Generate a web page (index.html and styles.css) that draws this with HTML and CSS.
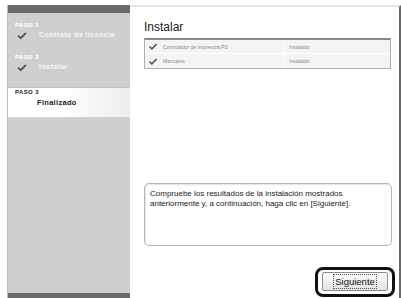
FILE: index.html
```html
<!DOCTYPE html>
<html>
<head>
<meta charset="utf-8">
<link rel="stylesheet" href="styles.css">
</head>
<body>
<div class="window">
  <aside class="sidebar">
    <div class="side-top"></div>
    <div class="steps">
      <div class="step done">
        <div class="step-label">PASO 1</div>
        <div class="step-name"><svg class="chk" viewBox="0 0 10 8"><path d="M0.6 4.2 L3.6 7 L9.5 0.9" fill="none" stroke="currentColor" stroke-width="2"/></svg>Contrato de licencia</div>
      </div>
      <div class="step done">
        <div class="step-label">PASO 2</div>
        <div class="step-name"><svg class="chk" viewBox="0 0 10 8"><path d="M0.6 4.2 L3.6 7 L9.5 0.9" fill="none" stroke="currentColor" stroke-width="2"/></svg>Instalar</div>
      </div>
      <div class="step current">
        <div class="step-label">PASO 3</div>
        <div class="step-name plain">Finalizado</div>
      </div>
    </div>
    <div class="side-fill"></div>
    <div class="side-bottom"></div>
  </aside>
  <main class="content">
    <h1 class="title">Instalar</h1>
    <div class="table">
      <div class="row">
        <div class="cell name"><svg class="tchk" viewBox="0 0 10 8"><path d="M0.6 4.2 L3.6 7 L9.5 0.9" fill="none" stroke="currentColor" stroke-width="2"/></svg>Controlador de impresora PS</div>
        <div class="cell status">Instalado</div>
      </div>
      <div class="row">
        <div class="cell name"><svg class="tchk" viewBox="0 0 10 8"><path d="M0.6 4.2 L3.6 7 L9.5 0.9" fill="none" stroke="currentColor" stroke-width="2"/></svg>Manuales</div>
        <div class="cell status">Instalado</div>
      </div>
    </div>
    <div class="spacer"></div>
    <div class="message">Compruebe los resultados de la instalación mostrados anteriormente y, a continuación, haga clic en [Siguiente].</div>
    <div class="actions">
      <div class="highlight"><button class="btn"><span>Siguiente</span></button></div>
    </div>
  </main>
</div>
</body>
</html>
```
FILE: styles.css
```css
* { box-sizing: border-box; }
html, body { margin: 0; padding: 0; background: #fff; }
body { width: 401px; height: 298px; overflow: hidden; font-family: "Liberation Sans", Arial, sans-serif; }

.window { display: flex; height: 298px; padding-top: 5px; }

.sidebar {
  margin-left: 7px;
  width: 123px;
  display: flex;
  flex-direction: column;
  background: #cfcfcf;
  border-left: 1px solid #bdbdbd;
}
.side-top { height: 8px; background: #6b6b6b; }
.steps { display: flex; flex-direction: column; padding-top: 8px; }
.step { padding: 0 0 0 7px; }
.step.done { height: 32px; color: #fff; }
.step-label { font-size: 6px; font-weight: bold; letter-spacing: 0.4px; line-height: 8px; text-shadow: 0 0 1px rgba(255,255,255,0.4); }
.step-name { display: flex; align-items: center; font-size: 7px; font-weight: bold; letter-spacing: 0.45px; line-height: 10px; margin-top: 1px; padding-left: 2px; }
.step.done .step-name { color: #f6f6f6; }
.chk { width: 10px; height: 7px; color: #4e4e4e; margin-right: 12px; }
.step.current {
  margin-top: 2px;
  height: 30px;
  padding-top: 0;
  background: linear-gradient(to right, #fff 0%, #fff 45%, #ededed 100%);
  border-top: 1px solid #bfbfbf;
  color: #222;
}
.step.current .step-label { color: #1e1e1e; text-shadow: none; }
.step-name.plain { padding-left: 22px; margin-top: 2px; color: #222; font-size: 7.5px; letter-spacing: 0.3px; }
.side-fill { flex: 1; }
.side-bottom { height: 5px; background: #6b6b6b; }

.content {
  flex: 1;
  display: flex;
  flex-direction: column;
  border-top: 2px solid #e4e4e4;
  border-right: 2px solid #6a6a6a;
  padding: 13px 7px 1px 13px;
  margin-left: 1px;
}
.title { margin: 0; font-size: 12px; font-weight: normal; color: #222; line-height: 14px; font-family: "Liberation Sans", Arial, sans-serif; }

.table {
  margin-top: 4px;
  margin-right: 1px;
  border: 1px solid #b0b0b0;
  border-top: 2px solid #8a8a8a;
  background: #f4f4f4;
}
.row { display: flex; height: 14px; align-items: center; border-bottom: 1px solid #fff; }
.row:last-child { border-bottom: none; }
.cell { font-size: 5px; color: #8c8c8c; }
.cell.name { width: 140px; display: flex; align-items: center; gap: 6px; padding-left: 4px; border-right: 1px solid #fff; height: 100%; }
.cell.status { padding-left: 4px; }
.tchk { width: 8px; height: 7px; color: #555; }

.spacer { flex: 1; }

.message {
  height: 63px;
  border: 1px solid #b6b6b6;
  border-radius: 5px;
  padding: 5px 5px;
  font-size: 8px;
  line-height: 10px;
  color: #222;
  box-shadow: inset 1px 1px 1px #e6e6e6;
  background: #fefefe;
}

.actions { display: flex; justify-content: flex-end; margin-top: 21px; margin-right: -3px; }
.highlight {
  border: 3px solid #111;
  border-radius: 8px;
  padding: 2px 4px 3px 4px;
  width: 80px;
}
.btn {
  display: block;
  width: 100%;
  height: 19px;
  border: 1px solid #8d8d8d;
  border-radius: 2px;
  background: linear-gradient(#fdfdfd, #e3e3e3);
  padding: 1px;
  font-family: "Liberation Sans", Arial, sans-serif;
  font-size: 9.5px;
  color: #111;
}
.btn span { display: block; border: 1px dotted #555; margin: 0 9px; line-height: 13px; }
```
